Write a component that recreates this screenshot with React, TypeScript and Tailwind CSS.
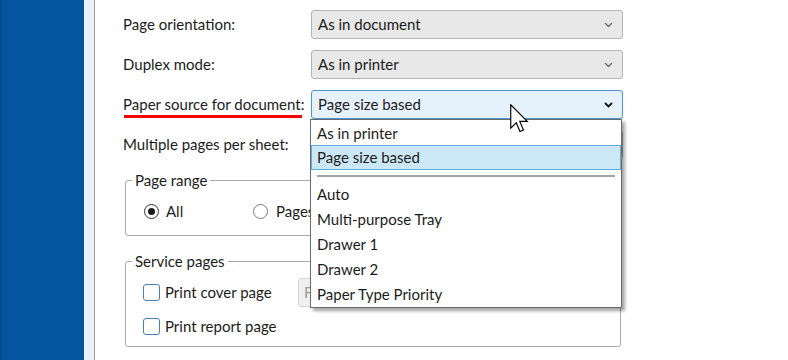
import { FC } from 'react';

const Chevron: FC<{ active?: boolean }> = ({ active }) => (
  <svg width="9" height="6" viewBox="0 0 9 6" className="shrink-0">
    <path
      d="M1 1 L4.5 4.5 L8 1"
      fill="none"
      stroke={active ? '#111' : '#6f6f6f'}
      strokeWidth={active ? 1.8 : 1.4}
    />
  </svg>
);

const Select: FC<{ value: string; active?: boolean }> = ({ value, active }) => (
  <div
    className={`w-[312px] h-[29px] flex items-center justify-between pl-[6px] pr-[9px] rounded-[3px] border ${
      active ? 'bg-[#e5f1fb] border-[#4a95d8]' : 'bg-[#e8e8e8] border-[#b4b4b4]'
    }`}
  >
    <span>{value}</span>
    <Chevron active={active} />
  </div>
);

const Row: FC<{ label: string; children?: React.ReactNode; mark?: boolean }> = ({ label, children, mark }) => (
  <div className="flex items-center h-[29px]">
    <span className="w-[188px] relative whitespace-nowrap">
      {label}
      {/* red annotation under the label */}
      {mark && <span className="absolute left-[1px] top-[22px] w-[178px] h-[3px] bg-[#ff0000]" />}
    </span>
    {children}
  </div>
);

const Radio: FC<{ checked?: boolean }> = ({ checked }) => (
  <span
    className={`w-[15px] h-[15px] rounded-full border flex items-center justify-center bg-white ${
      checked ? 'border-[#333]' : 'border-[#7a7a7a]'
    }`}
  >
    {checked && <span className="w-[7px] h-[7px] rounded-full bg-[#1a1a1a]" />}
  </span>
);

const Check: FC = () => <span className="w-[17px] h-[17px] rounded-[3px] border border-[#4b7db6] bg-white" />;

const options = ['Auto', 'Multi-purpose Tray', 'Drawer 1', 'Drawer 2', 'Paper Type Priority'];

const App: FC = () => (
  <div
    className="flex w-[788px] h-[360px] overflow-hidden bg-white text-[15px] text-[#1b1b1b]"
    style={{ fontFamily: '"Segoe UI", Lato, sans-serif' }}
  >
    <div className="w-[84px] bg-[#02559e] border-l-[2px] border-[#044a8c]" />
    <div className="w-[10px] bg-[#e8f1fc]" />
    <div className="flex-1 relative border-l border-[#9c9c9c] pl-[28px] pt-[10px]">
      <div className="flex flex-col gap-[11px]">
        <Row label="Page orientation:">
          <Select value="As in document" />
        </Row>
        <Row label="Duplex mode:">
          <Select value="As in printer" />
        </Row>
        <Row label="Paper source for document:" mark>
          <Select value="Page size based" active />
        </Row>
        <Row label="Multiple pages per sheet:">
          <Select value="1" />
        </Row>
      </div>

      <fieldset className="ml-[2px] mt-[11px] w-[496px] h-[66px] border border-[#ababab] rounded-[3px]">
        <legend className="ml-[6px] px-[3px] leading-[20px]">Page range</legend>
        <div className="flex items-center pl-[18px] pt-[10px]">
          <label className="flex items-center gap-[7px] w-[109px]">
            <Radio checked />
            All
          </label>
          <label className="flex items-center gap-[8px]">
            <Radio />
            Pages:
          </label>
        </div>
      </fieldset>

      <fieldset className="ml-[2px] mt-[15px] w-[496px] h-[96px] border border-[#ababab] rounded-[3px]">
        <legend className="ml-[6px] px-[3px] leading-[20px]">Service pages</legend>
        <div className="flex flex-col gap-[5px] pl-[17px] pt-[7px]">
          <div className="flex items-center h-[29px]">
            <label className="flex items-center gap-[5px] w-[155px]">
              <Check />
              Print cover page
            </label>
            <div className="w-[200px] h-[29px] flex items-center pl-[5px] rounded-[3px] border border-[#d6d6d6] bg-[#f0f0f0] text-[#9a9a9a]">
              First page
            </div>
          </div>
          <label className="flex items-center gap-[5px] h-[29px]">
            <Check />
            Print report page
          </label>
        </div>
      </fieldset>

      {/* open dropdown list */}
      <div className="absolute left-[215px] top-[119px] w-[312px] bg-white border border-[#6a6a6a] pt-[1px] shadow-[3px_3px_3px_rgba(0,0,0,0.35)]">
        <div className="h-[24px] flex items-center pl-[6px]">As in printer</div>
        <div className="h-[25px] flex items-center pl-[5px] bg-[#cce8f6] border border-[#5eaee0]">Page size based</div>
        <div className="h-[12px] pt-[5px] px-[6px]">
          <div className="h-[2px] bg-[#a3a3a3]" />
        </div>
        {options.map((o) => (
          <div key={o} className="h-[25px] flex items-center pl-[6px]">
            {o}
          </div>
        ))}
      </div>

      {/* mouse pointer */}
      <svg className="absolute left-[415px] top-[104px]" width="19" height="30" viewBox="0 0 13 20.5">
        <path
          d="M0.5 0.5 V16.5 L4.3 12.8 L6.8 18.8 L9.2 17.8 L6.7 11.9 H11.8 Z"
          fill="#fff"
          stroke="#000"
          strokeWidth="0.8"
          strokeLinejoin="miter"
        />
      </svg>
    </div>
  </div>
);

export default App;
